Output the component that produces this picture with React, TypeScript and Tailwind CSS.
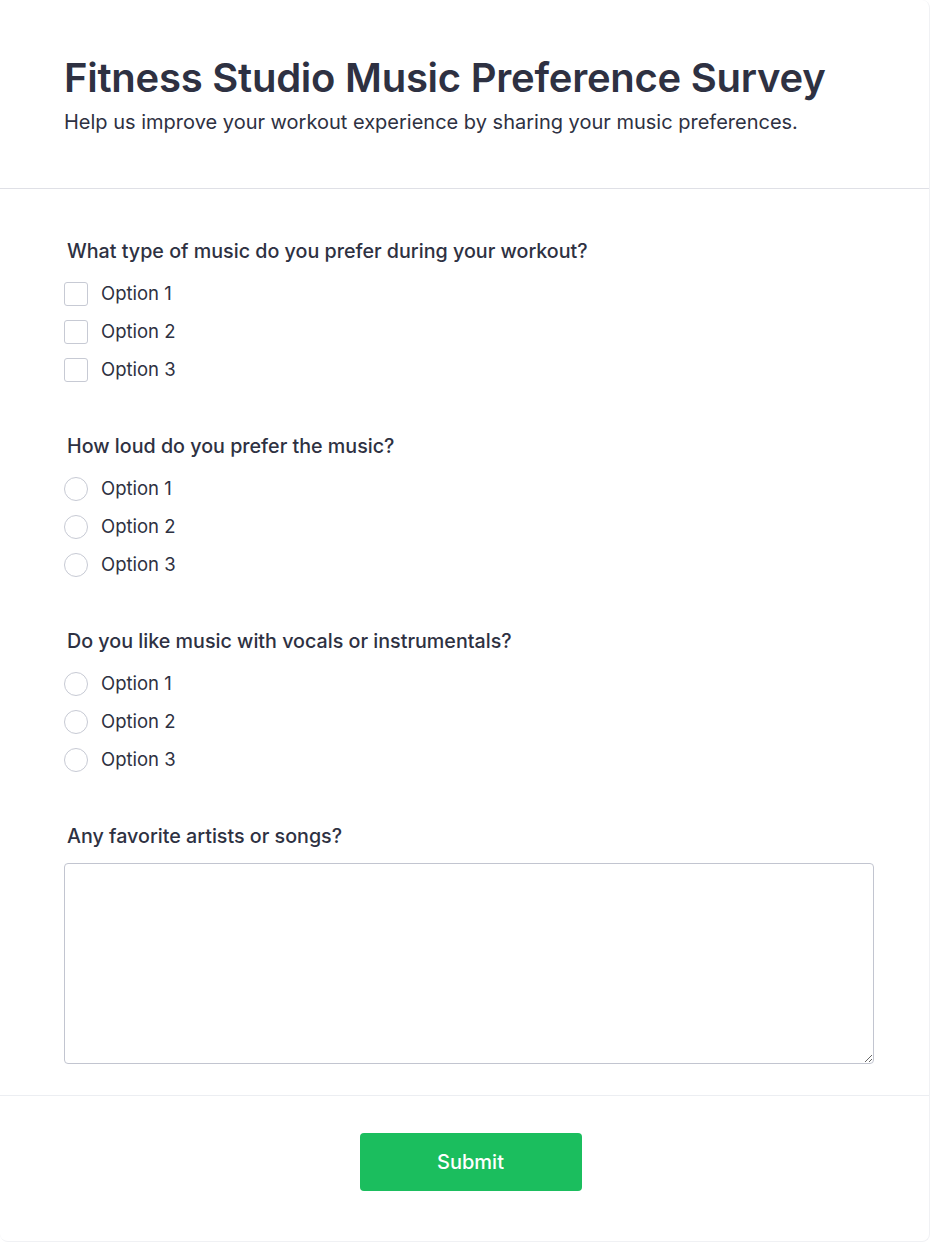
import React from 'react';

const questions = [
  { id: 'type', label: 'What type of music do you prefer during your workout?', kind: 'checkbox' },
  { id: 'loud', label: 'How loud do you prefer the music?', kind: 'radio' },
  { id: 'vocals', label: 'Do you like music with vocals or instrumentals?', kind: 'radio' },
];

const options = ['Option 1', 'Option 2', 'Option 3'];

export default function App() {
  return (
    <div className="min-h-screen bg-white" style={{ fontFamily: 'Inter, "Noto Sans", sans-serif' }}>
      <div className="w-[930px] bg-white rounded-lg border-r border-b border-[#f0f1f4] text-[#2e3142]">
        {/* Header */}
        <div className="px-16 pt-[58px] pb-[52px] border-b border-[#dfe0e6]">
          <h1 className="text-[40px] leading-10 font-semibold tracking-[-0.25px]">
            Fitness Studio Music Preference Survey
          </h1>
          <p className="mt-[10px] text-[20px] leading-7">
            Help us improve your workout experience by sharing your music preferences.
          </p>
        </div>

        {/* Questions */}
        <div className="pl-16 pr-[55px] pt-12 pb-[31px] border-b border-[#eceef2] flex flex-col gap-12">
          {questions.map((q) => (
            <div key={q.id} className="flex flex-col">
              <label className="pl-[3px] text-[19.7px] leading-7 font-medium">{q.label}</label>
              <div className="mt-[15px] flex flex-col gap-[10px]">
                {options.map((o) => (
                  <label key={o} className="flex items-center gap-[13px] h-7 text-[18.5px]">
                    <input
                      type={q.kind}
                      name={q.id}
                      className={
                        'appearance-none w-6 h-6 border border-[#c7cad4] bg-white ' +
                        (q.kind === 'radio' ? 'rounded-full' : 'rounded-[3px]')
                      }
                    />
                    <span>{o}</span>
                  </label>
                ))}
              </div>
            </div>
          ))}

          <div className="flex flex-col">
            <label className="pl-[3px] text-[19.7px] leading-7 font-medium">Any favorite artists or songs?</label>
            <textarea className="mt-[13px] w-full h-[201px] border border-[#c2c5d0] rounded-[4px] outline-none" />
          </div>
        </div>

        {/* Footer */}
        <div className="pl-[12px] pt-[37px] pb-[50px] flex justify-center">
          <button className="w-[222px] h-[58px] rounded-[4px] bg-[#1bbe5e] text-white text-[20px] font-medium">
            Submit
          </button>
        </div>
      </div>
    </div>
  );
}
